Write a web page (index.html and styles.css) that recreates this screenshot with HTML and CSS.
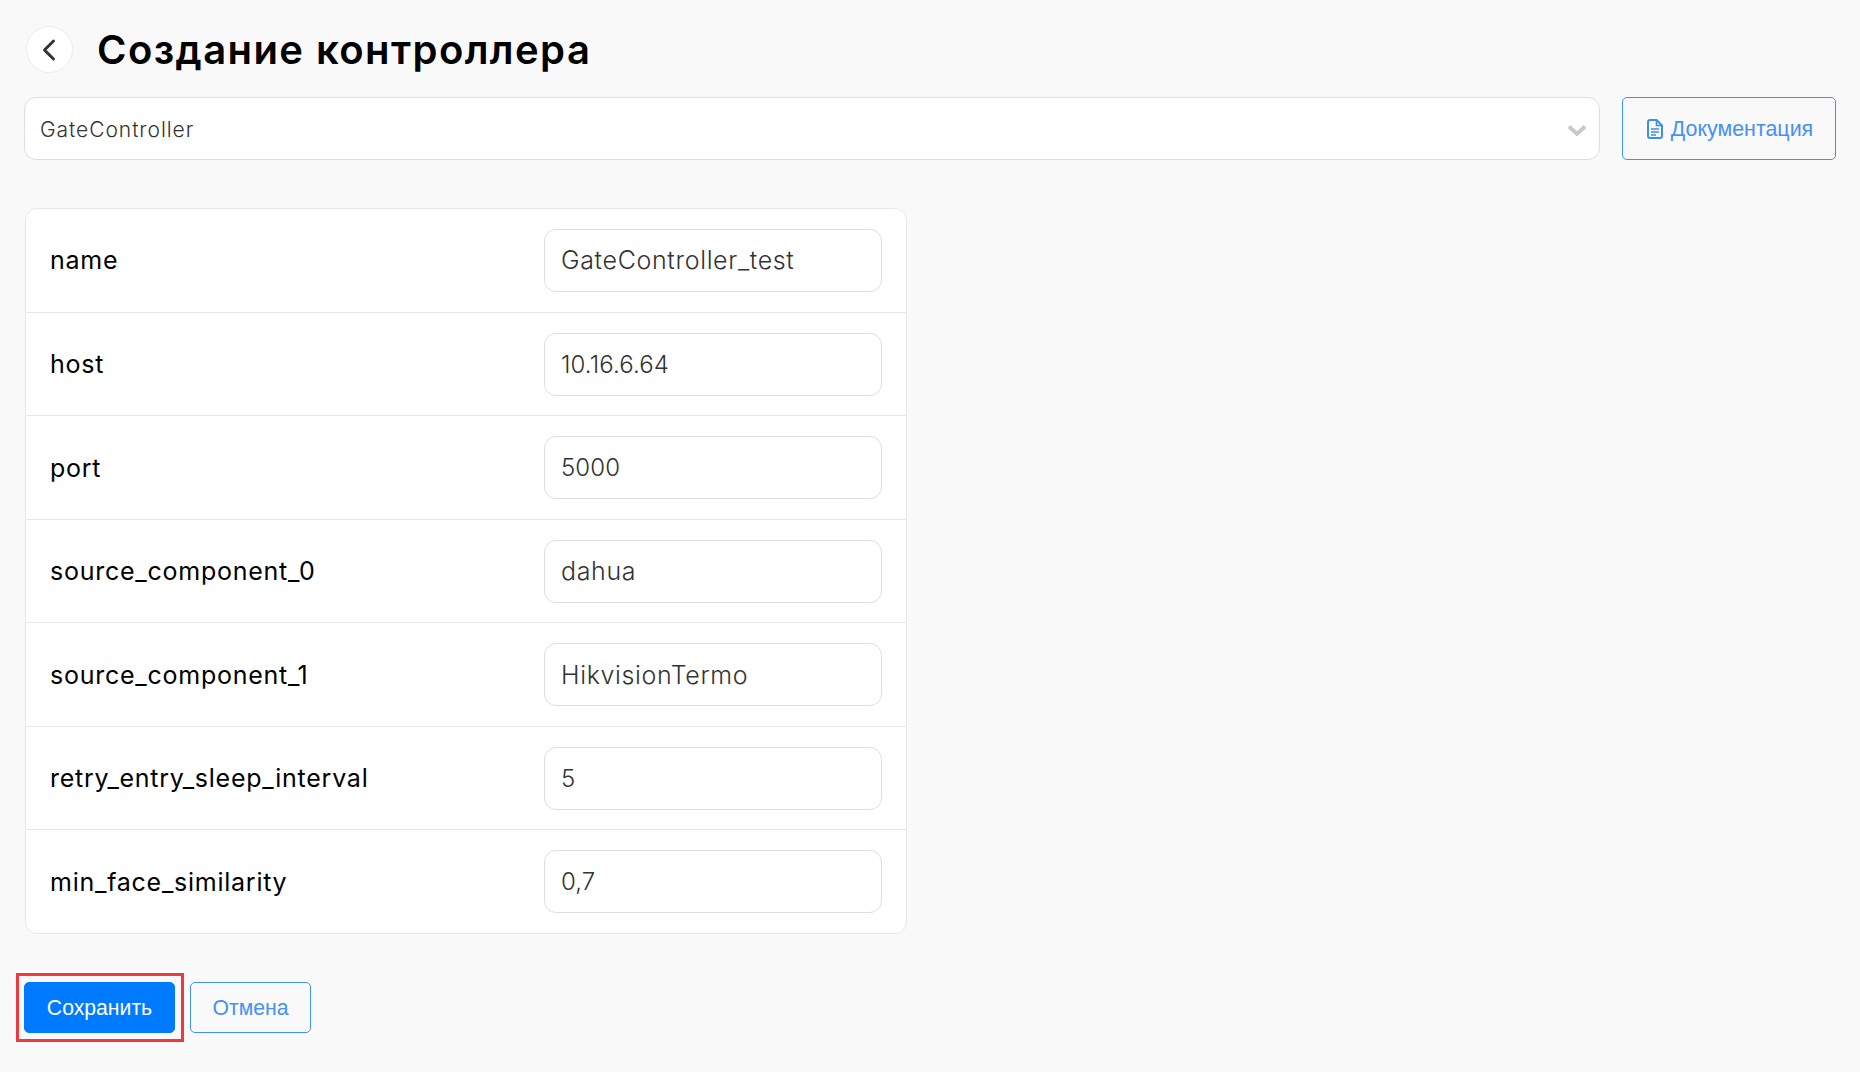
FILE: index.html
```html
<!DOCTYPE html>
<html lang="ru">
<head>
<meta charset="utf-8">
<title>Создание контроллера</title>
<link rel="stylesheet" href="styles.css">
</head>
<body>
<main class="page">
  <header class="header">
    <button class="back" type="button" aria-label="Назад">
      <svg width="16" height="24" viewBox="0 0 16 24" fill="none"><path d="M11.500 3 2.500 12l9 9" stroke="#333" stroke-width="3" stroke-linecap="round" stroke-linejoin="round"/></svg>
    </button>
    <h1 class="title">Создание контроллера</h1>
  </header>
  <div class="toolbar">
    <div class="select">
      <span class="select-text">GateController</span>
      <svg class="chevron" width="20" height="12" viewBox="0 0 20 12" fill="none"><path d="M2 2.500l8 7.500 8-7.500" stroke="#c8c8c8" stroke-width="3.800"/></svg>
    </div>
    <button class="btn btn-outline btn-doc" type="button">
      <svg width="16" height="20" viewBox="0 0 16 20" fill="none"><path d="M1 3a2 2 0 0 1 2-2h6.500L15 6.500V17a2 2 0 0 1-2 2H3a2 2 0 0 1-2-2z" stroke="#3b8ff3" stroke-width="2"/><path d="M9.500 1v5.500H15M4 10h8M4 13h8M4 16h5" stroke="#3b8ff3" stroke-width="1.600"/></svg>
      Документация
    </button>
  </div>
  <section class="card">
    <div class="row"><label class="label">name</label><input class="input" value="GateController_test"></div>
    <div class="row"><label class="label">host</label><input class="input input-num" value="10.16.6.64"></div>
    <div class="row"><label class="label">port</label><input class="input input-num" value="5000"></div>
    <div class="row"><label class="label">source_component_0</label><input class="input" value="dahua"></div>
    <div class="row"><label class="label">source_component_1</label><input class="input" value="HikvisionTermo"></div>
    <div class="row"><label class="label">retry_entry_sleep_interval</label><input class="input input-num" value="5"></div>
    <div class="row"><label class="label">min_face_similarity</label><input class="input input-num" value="0,7"></div>
  </section>
  <div class="actions">
    <button class="btn btn-primary" type="button">Сохранить</button>
    <button class="btn btn-outline btn-cancel" type="button">Отмена</button>
  </div>
</main>
</body>
</html>
```
FILE: styles.css
```css
* { box-sizing: border-box; }
html, body { margin: 0; height: 100%; }
body {
  background: #f9f9f9;
  font-family: Inter, "Noto Sans", sans-serif;
  color: #000;
}
.page { padding: 26px 24px 0 24px; }
.header { display: flex; align-items: center; gap: 24px; height: 47px; padding-left: 2px; }
.back {
  width: 47px; height: 47px; padding: 0;
  display: flex; align-items: center; justify-content: center;
  background: #fff; border: 1px solid #ececec; border-radius: 50%;
}
.title { margin: 0; font-size: 40px; font-weight: 600; letter-spacing: 1.42px; line-height: 46px; }
.toolbar { display: flex; gap: 22px; margin-top: 24px; }
.select {
  flex: 1; height: 63px; padding: 2px 12px 0 15px;
  display: flex; align-items: center; justify-content: space-between;
  background: #fff; border: 1px solid #dedede; border-radius: 12px;
}
.select-text { font-size: 21px; font-weight: 300; letter-spacing: 0.95px; color: #333; }
.btn {
  font-family: "Liberation Sans", Arial, sans-serif;
  font-size: 21.2px; border-radius: 5px; cursor: pointer;
}
.btn-outline { background: transparent; border: 1px solid #3b94f5; color: #4790f5; }
.btn-doc {
  width: 214px; height: 63px; padding: 1px 0 0 2px;
  display: flex; align-items: center; justify-content: center; gap: 8px;
  font-size: 21.4px;
}
.card {
  width: 882px; margin: 48px 0 0 1px; height: 726px;
  display: flex; flex-direction: column;
  background: #fff; border: 1px solid #e8e8e8; border-radius: 12px;
}
.row {
  flex: 1; display: flex; align-items: center; justify-content: space-between;
  padding: 0.4px 24px 0;
  border-bottom: 1px solid #e8e8e8;
}
.row:last-child { border-bottom: 0; }
.label { font-size: 25px; font-weight: 400; letter-spacing: 0.75px; }
.input {
  width: 338px; height: 63px; padding: 0 16px;
  font-family: inherit; font-size: 25px; font-weight: 300; letter-spacing: 0.65px; color: #333;
  background: #fff; border: 1px solid #dedede; border-radius: 12px; outline: 0;
}
.input-num { font-size: 24px; letter-spacing: 0.1px; }
.actions { display: flex; gap: 15px; margin-top: 48px; }
.btn-primary {
  position: relative;
  width: 151px; height: 51px; padding: 0;
  background: #007bff; border: 1px solid #007bff; color: #fff;
}
.btn-primary::after {
  content: "";
  position: absolute; top: -10px; right: -10px; bottom: -10px; left: -9px;
  border: 3px solid #ee3a3f;
}
.btn-cancel { width: 121px; height: 51px; padding: 0; }
```
